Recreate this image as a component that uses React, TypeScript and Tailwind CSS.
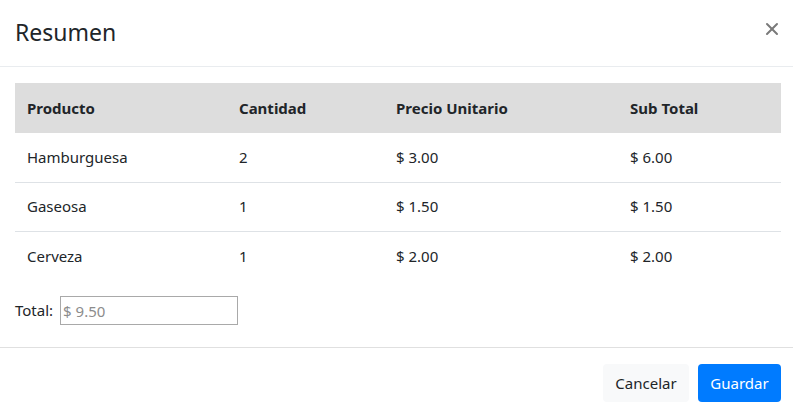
import { X } from "lucide-react";

interface Item {
  producto: string;
  cantidad: number;
  precio: number;
}

const items: Item[] = [
  { producto: "Hamburguesa", cantidad: 2, precio: 3 },
  { producto: "Gaseosa", cantidad: 1, precio: 1.5 },
  { producto: "Cerveza", cantidad: 1, precio: 2 },
];

const money = (n: number) => `$ ${n.toFixed(2)}`;

export default function App() {
  const total = items.reduce((acc, it) => acc + it.cantidad * it.precio, 0);

  return (
    <div className="w-[793px] h-[416px] bg-white text-[#212529] font-['Segoe_UI','Noto_Sans',sans-serif] text-[16px] overflow-hidden">
      {/* Header */}
      <div className="h-[67px] flex items-center justify-between pl-[15px] pr-[11px] border-b border-[#e9ecef]">
        <h4 className="text-[23px] leading-none pb-[1px]">Resumen</h4>
        <button className="text-[#7a7a7a] mb-[9px]">
          <X className="w-[20px] h-[20px]" strokeWidth={2.4} />
        </button>
      </div>

      {/* Body */}
      <div className="px-[15px] pt-[16px]">
        <table className="w-[766px] table-fixed border-collapse">
          <colgroup>
            <col className="w-[212px]" />
            <col className="w-[157px]" />
            <col className="w-[234px]" />
            <col className="w-[163px]" />
          </colgroup>
          <thead>
            <tr className="bg-[#dddddd] h-[50px]">
              <th className="text-left font-bold px-[12px] text-[15px]">Producto</th>
              <th className="text-left font-bold px-[12px] text-[15px]">Cantidad</th>
              <th className="text-left font-bold px-[12px] text-[15px]">Precio Unitario</th>
              <th className="text-left font-bold px-[12px] text-[15px]">Sub Total</th>
            </tr>
          </thead>
          <tbody>
            {items.map((it, i) => (
              <tr key={it.producto} className={i > 0 ? "h-[49px] border-t border-[#dee2e6]" : "h-[49px]"}>
                <td className="px-[12px] text-[15px]">{it.producto}</td>
                <td className="px-[12px] text-[15px]">{it.cantidad}</td>
                <td className="px-[12px] text-[15px]">{money(it.precio)}</td>
                <td className="px-[12px] text-[15px]">{money(it.cantidad * it.precio)}</td>
              </tr>
            ))}
          </tbody>
        </table>

        <div className="flex items-center gap-[7px] mt-[16px] h-[29px]">
          <label className="text-[15px]">Total:</label>
          <input
            readOnly
            placeholder={money(total)}
            className="w-[178px] h-[29px] border border-[#a9a9a9] px-[2px] text-[15px] placeholder:text-[#8c8c8c] outline-none"
          />
        </div>
      </div>

      {/* Footer */}
      <div className="mt-[22px] border-t border-[#e0e0e0] flex justify-end gap-[9px] px-[12px] pt-[16px]">
        <button className="h-[38px] w-[86px] rounded-[4px] bg-[#f8f9fa] text-[15px] text-[#212529]">Cancelar</button>
        <button className="h-[38px] w-[83px] rounded-[4px] bg-[#007bff] text-[15px] text-white">Guardar</button>
      </div>
    </div>
  );
}
